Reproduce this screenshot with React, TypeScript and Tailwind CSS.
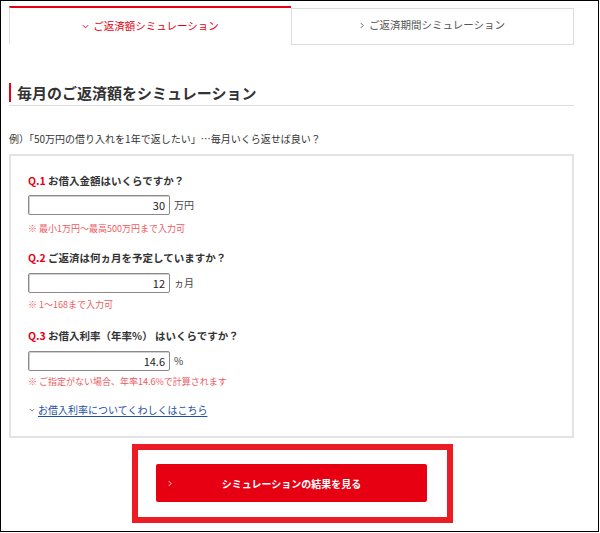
import React from "react";

const jp = { fontFamily: '"Meiryo","Noto Sans CJK JP","Noto Sans",sans-serif' };

function ChevronDown({ className }: { className?: string }) {
  return (
    <svg viewBox="0 0 8 5" className={className} fill="none" stroke="currentColor" strokeWidth="1.1">
      <path d="M1 1 L4 4 L7 1" />
    </svg>
  );
}
function ChevronRight({ className }: { className?: string }) {
  return (
    <svg viewBox="0 0 5 8" className={className} fill="none" stroke="currentColor" strokeWidth="1.1">
      <path d="M1 1 L4 4 L1 7" />
    </svg>
  );
}

function Field({ value, unit }: { value: string; unit: string }) {
  return (
    <div className="flex items-center gap-[4px]">
      <input
        readOnly
        value={value}
        className="w-[142px] h-[20px] border border-[#8a8a8a] rounded-[2px] text-right pr-[4px] text-[11px] text-[#222] bg-white shadow-[inset_1px_1px_0_#d0d0d0] outline-none"
        style={jp}
      />
      <span className="text-[10px] text-[#444] leading-[20px]">{unit}</span>
    </div>
  );
}

function Question({ num, text }: { num: string; text: string }) {
  return (
    <div className="text-[10.5px] font-bold leading-[16px] text-[#333]">
      <span className="text-[#e60012]">{num}</span> {text}
    </div>
  );
}

function Note({ text }: { text: string }) {
  return <div className="text-[9px] leading-[12px] text-[#ee5a5f]">{text}</div>;
}

export default function App() {
  return (
    <div className="w-[600px] h-[533px] bg-white overflow-hidden" style={jp}>
      <div className="w-[599px] h-[532px] border border-black bg-white pl-[8px] pr-[24px]">
        {/* Tabs */}
        <div className="flex mt-[5px]">
          <div className="w-[282px] h-[38px] border-t-2 border-t-[#e60012] border-l border-l-[#dcdcdc] flex items-center justify-center gap-[4px] text-[10.5px] text-[#e60012]">
            <ChevronDown className="w-[7px] h-[5px] mt-[1px]" />
            <span>ご返済額シミュレーション</span>
          </div>
          <div className="w-[283px] h-[37px] mt-[2px] border border-[#dcdcdc] flex items-center justify-center gap-[5px] text-[10.5px] text-[#555] pb-[3px]">
            <ChevronRight className="w-[4px] h-[7px]" />
            <span>ご返済期間シミュレーション</span>
          </div>
        </div>

        {/* Heading */}
        <div className="mt-[38px] border-b border-[#dedede] pb-[3px]">
          <div className="border-l-2 border-[#e60012] h-[19px] pl-[6px] flex items-center text-[15px] font-bold text-[#333] leading-[19px]">
            毎月のご返済額をシミュレーション
          </div>
        </div>

        <div className="mt-[26px] text-[10px] leading-[14px] text-[#333]">
          例）「50万円の借り入れを1年で返したい」…毎月いくら返せば良い？
        </div>

        {/* Box */}
        <div className="mt-[8px] h-[284px] border-2 border-[#e3e3e3] pl-[17px] pt-[17px]">
          <Question num="Q.1" text="お借入金額はいくらですか？" />
          <div className="mt-[6px]">
            <Field value="30" unit="万円" />
          </div>
          <div className="mt-[8px]">
            <Note text="※ 最小1万円～最高500万円まで入力可" />
          </div>

          <div className="mt-[15px]">
            <Question num="Q.2" text="ご返済は何ヵ月を予定していますか？" />
          </div>
          <div className="mt-[7px]">
            <Field value="12" unit="ヵ月" />
          </div>
          <div className="mt-[6px]">
            <Note text="※ 1～168まで入力可" />
          </div>

          <div className="mt-[17px]">
            <Question num="Q.3" text="お借入利率（年率%） はいくらですか？" />
          </div>
          <div className="mt-[7px]">
            <Field value="14.6" unit="%" />
          </div>
          <div className="mt-[5px]">
            <Note text="※ ご指定がない場合、年率14.6%で計算されます" />
          </div>

          <div className="mt-[14px] flex items-center gap-[3px] leading-[16px]">
            <ChevronDown className="w-[6px] h-[4px] text-[#777] ml-[1px]" />
            <a className="text-[10px] text-[#1d50a2] underline underline-offset-[2px]">
              お借入利率についてくわしくはこちら
            </a>
          </div>
        </div>

        {/* Button frame */}
        <div className="flex justify-center mt-[6px] pl-[2px]">
          <div className="w-[321px] h-[79px] border-[6px] border-[#ec1c24] pl-[18px] pt-[14px]">
            <div className="w-[271px] h-[38px] bg-[#e60012] rounded-[2px] flex items-center relative text-white">
              <ChevronRight className="w-[4px] h-[7px] absolute left-[12px]" />
              <span className="w-full text-center text-[10px] font-bold">
                シミュレーションの結果を見る
              </span>
            </div>
          </div>
        </div>
      </div>
    </div>
  );
}
